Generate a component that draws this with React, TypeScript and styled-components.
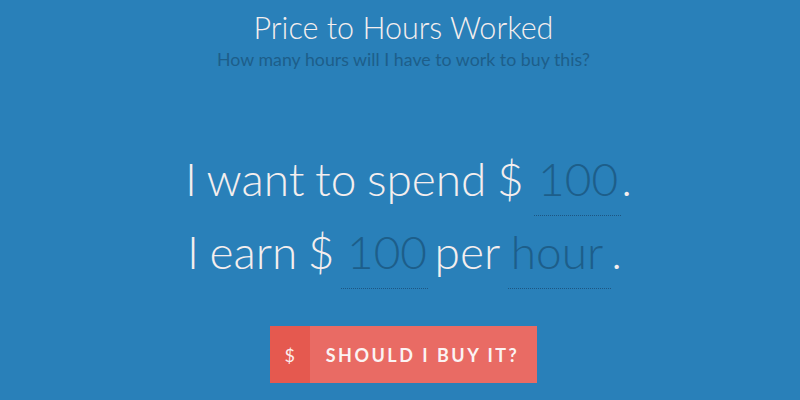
import React from "react";
import styled, { createGlobalStyle } from "styled-components";

const Global = createGlobalStyle`
  html, body { margin: 0; padding: 0; background: #2980b9; }
  body { font-family: Lato, "Open Sans", sans-serif; -webkit-font-smoothing: antialiased; }
`;

const Page = styled.div`
  box-sizing: border-box;
  width: 800px;
  height: 400px;
  padding-left: 7px;
  overflow: hidden;
  background: #2980b9;
  display: flex;
  flex-direction: column;
  align-items: center;
`;

const Header = styled.header`
  display: flex;
  flex-direction: column;
  align-items: center;
  padding-top: 9px;
`;

const Title = styled.h1`
  margin: 0;
  font-weight: 300;
  font-size: 30.5px;
  line-height: 36px;
  color: #f4eeee;
`;

const Subtitle = styled.p`
  margin: 2px 0 0;
  font-weight: 400;
  font-size: 17.8px;
  line-height: 24px;
  color: #1d5e8a;
`;

const Sentences = styled.div`
  margin-top: 72px;
  display: flex;
  flex-direction: column;
  align-items: center;
`;

const Line = styled.div<{ $shift?: number }>`
  font-weight: 300;
  font-size: 46px;
  line-height: 72px;
  color: #f4eeee;
  white-space: pre;
  word-spacing: -2px;
  margin-left: ${(p) => p.$shift ?? 0}px;
`;

const Field = styled.span<{ $l: number; $r: number; $ml?: number; $mr?: number }>`
  display: inline-block;
  color: #1d5e8a;
  padding: 0 ${(p) => p.$r}px 0 ${(p) => p.$l}px;
  margin: 0 ${(p) => p.$mr ?? 0}px 0 ${(p) => p.$ml ?? 0}px;
  border-bottom: 1px dotted #1d5683;
`;

const Button = styled.button`
  margin-top: 37px;
  display: flex;
  align-items: stretch;
  height: 57px;
  padding: 0;
  border: none;
  cursor: pointer;
  background: #e96b64;
  font-family: Lato, sans-serif;
`;

const ButtonIcon = styled.span`
  width: 40px;
  display: flex;
  align-items: center;
  justify-content: center;
  background: #e5594f;
  color: #fbeeee;
  font-size: 18px;
  font-weight: 400;
`;

const ButtonLabel = styled.span`
  display: flex;
  align-items: center;
  padding: 0 18px 0 16px;
  color: #fbf3f3;
  font-size: 18px;
  font-weight: 700;
  letter-spacing: 2.5px;
  text-transform: uppercase;
`;

export default function App() {
  return (
    <>
      <Global />
      <Page>
        <Header>
          <Title>Price to Hours Worked</Title>
          <Subtitle>How many hours will I have to work to buy this?</Subtitle>
        </Header>
        <Sentences>
          <Line $shift={10}>
            I want to spend $ <Field $l={4} $r={3}>100</Field>.
          </Line>
          <Line $shift={2}>
            I earn $ <Field $l={6} $r={1} $ml={-4} $mr={-4}>100</Field> per{" "}
            <Field $l={3} $r={8} $ml={-2}>hour</Field>.
          </Line>
        </Sentences>
        <Button>
          <ButtonIcon>$</ButtonIcon>
          <ButtonLabel>Should I buy it?</ButtonLabel>
        </Button>
      </Page>
    </>
  );
}
